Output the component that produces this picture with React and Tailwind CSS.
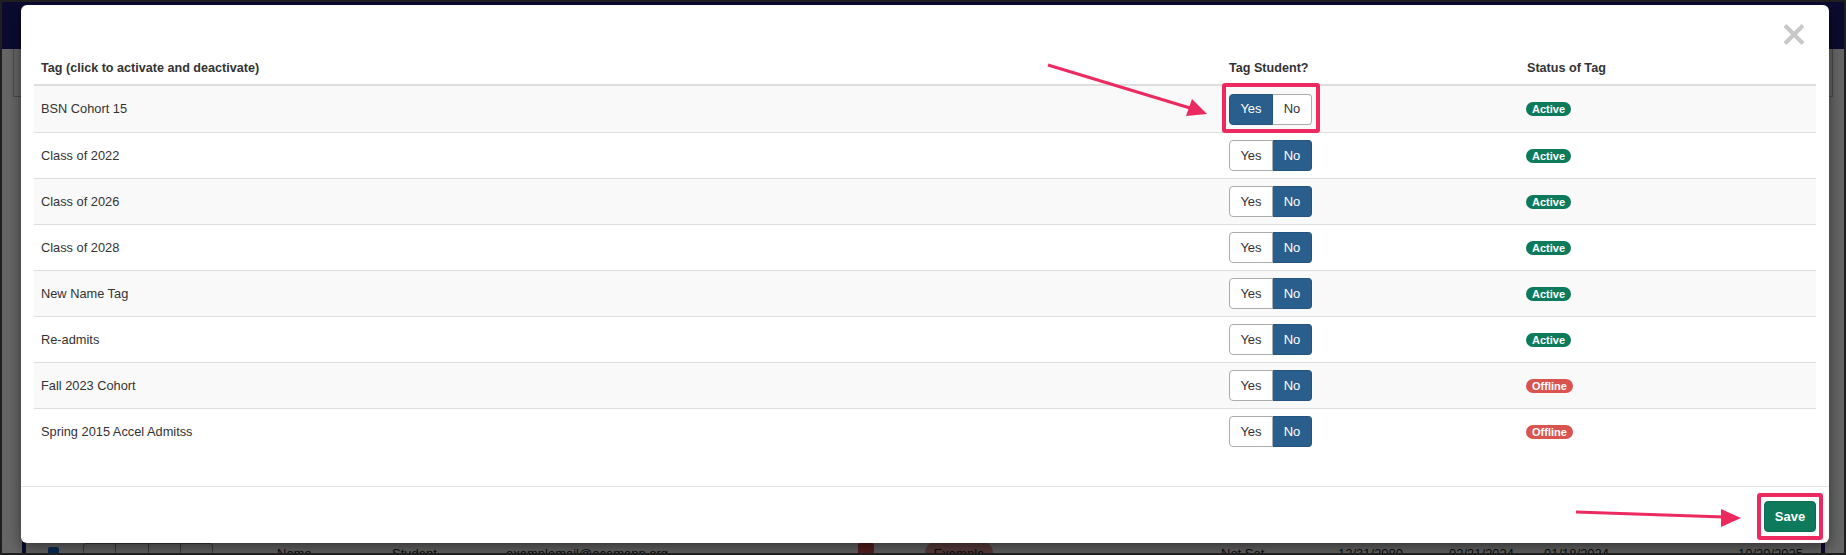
import React, { useState } from 'react';

const FONT = { fontFamily: '"Liberation Sans", Arial, sans-serif' };

const TAGS = [
  { name: 'BSN Cohort 15', tagged: true, status: 'Active' },
  { name: 'Class of 2022', tagged: false, status: 'Active' },
  { name: 'Class of 2026', tagged: false, status: 'Active' },
  { name: 'Class of 2028', tagged: false, status: 'Active' },
  { name: 'New Name Tag', tagged: false, status: 'Active' },
  { name: 'Re-admits', tagged: false, status: 'Active' },
  { name: 'Fall 2023 Cohort', tagged: false, status: 'Offline' },
  { name: 'Spring 2015 Accel Admitss', tagged: false, status: 'Offline' },
];

function YesNo({ value, onChange }) {
  const on = 'bg-[#2a5e8c] border-[#245480] text-white';
  const off = 'bg-white border-[#adadad] text-[#333]';
  return (
    <div className="flex h-[31px]">
      <button
        type="button"
        onClick={() => onChange(true)}
        className={`w-[44px] h-full border rounded-l-[4px] text-[13px] ${value ? on : off}`}
      >
        Yes
      </button>
      <button
        type="button"
        onClick={() => onChange(false)}
        className={`w-[39px] h-full border border-l-0 rounded-r-[4px] text-[13px] ${value ? off : on}`}
      >
        No
      </button>
    </div>
  );
}

function StatusBadge({ status }) {
  const color = status === 'Active' ? 'bg-[#0c7a5b]' : 'bg-[#d9534f]';
  return (
    <span className={`inline-block h-[14px] px-[6px] rounded-full text-[11px] leading-[14px] font-bold text-white ${color}`}>
      {status}
    </span>
  );
}

// page that sits under the modal backdrop
function BackgroundPage() {
  return (
    <div className="flex flex-col h-full bg-white">
      <div className="shrink-0 h-[47px] bg-[#1c1c78]" />
      <div className="shrink-0 mx-[11px] h-[48px] border-x border-b border-[#bbb]" />
      <div className="shrink-0 h-[444px]" />
      <div className="shrink-0 flex items-start h-[36px] text-[13px] text-[#222]">
        <div className="w-[20px]" />
        <div className="w-[4px] h-full bg-[#1c1c78]" />
        <div className="w-[22px]" />
        <div className="w-[11px] h-[11px] mt-[6px] bg-[#1a6fd8] rounded-[2px]" />
        <div className="w-[24px]" />
        <div className="flex w-[130px] h-[30px] mt-[2px] border border-[#999] rounded-[3px]">
          <div className="flex-1 border-r border-[#999]" />
          <div className="flex-1 border-r border-[#999]" />
          <div className="flex-1 border-r border-[#999]" />
          <div className="flex-1" />
        </div>
        <div className="w-[64px]" />
        <div className="w-[115px] pt-[3px]">Name</div>
        <div className="w-[114px] pt-[3px]">Student</div>
        <div className="w-[352px] pt-[3px]">examplemail@acemapp.org</div>
        <div className="w-[16px] h-[16px] mt-[2px] bg-[#d9534f] rounded-[2px]" />
        <div className="w-[51px]" />
        <div className="w-[68px] h-[20px] mt-[1px] rounded-full bg-[#e89a9a] text-center pt-[2px]">Example</div>
        <div className="w-[228px]" />
        <div className="w-[117px] pt-[3px]">Not Set</div>
        <div className="w-[111px] pt-[3px]">12/31/2080</div>
        <div className="w-[95px] pt-[3px]">02/21/2024</div>
        <div className="w-[194px] pt-[3px]">01/18/2024</div>
        <div className="w-[83px] pt-[3px]">10/29/2025</div>
        <div className="w-[4px] h-full bg-[#1c1c78]" />
      </div>
    </div>
  );
}

export default function App() {
  const [tags, setTags] = useState(TAGS);

  const setTagged = (i, v) =>
    setTags((prev) => prev.map((t, j) => (j === i ? { ...t, tagged: v } : t)));

  return (
    <div
      className="relative w-[1846px] h-[555px] overflow-hidden border-2 border-[#1f1f1f] bg-black"
      style={FONT}
    >
      <BackgroundPage />
      <div className="absolute inset-0 bg-black/60" />

      {/* modal */}
      <div className="absolute left-[19px] top-[3px] w-[1808px] h-[538px] flex flex-col bg-white rounded-[6px] shadow-[0_5px_15px_rgba(0,0,0,0.5)] text-[#333]">
        <div className="shrink-0 h-[47px] flex justify-end pt-[18px] pr-[24px]">
          <button type="button" className="w-[22px] h-[23px]">
            <svg width="22" height="23" viewBox="0 0 22 23">
              <path d="M2 2.5 L20 20.5 M20 2.5 L2 20.5" stroke="#c8c8c8" strokeWidth="4" />
            </svg>
          </button>
        </div>

        <div className="shrink-0 px-[13px]">
          <div className="grid grid-cols-[1187px_298px_1fr] h-[34px] items-center border-b-2 border-[#ddd] text-[12.6px] font-bold">
            <div className="px-[7px]">Tag (click to activate and deactivate)</div>
            <div className="px-[8px]">Tag Student?</div>
            <div className="px-[8px]">Status of Tag</div>
          </div>
          {tags.map((t, i) => (
            <div
              key={t.name}
              className={`grid grid-cols-[1187px_298px_1fr] h-[46px] items-center text-[12.8px] ${
                i > 0 ? 'border-t border-[#ddd]' : ''
              } ${i % 2 === 0 ? 'bg-[#f9f9f9]' : 'bg-white'}`}
            >
              <div className="px-[7px]">{t.name}</div>
              <div className="px-[8px]">
                <YesNo value={t.tagged} onChange={(v) => setTagged(i, v)} />
              </div>
              <div className="px-[7px] flex">
                <StatusBadge status={t.status} />
              </div>
            </div>
          ))}
        </div>

        <div className="shrink-0 h-[32px]" />

        <div className="flex-1 flex justify-end items-start border-t border-[#e5e5e5] pt-[14px] pr-[13px]">
          <button
            type="button"
            className="w-[52px] h-[31px] rounded-[4px] bg-[#0c7a5b] border border-[#0a6b50] text-white text-[13px] font-bold"
          >
            Save
          </button>
        </div>
      </div>

      {/* annotations */}
      <div className="absolute left-[1220px] top-[81px] w-[98px] h-[50px] border-4 border-[#ec2a60] rounded-[3px]" />
      <div className="absolute left-[1755px] top-[491px] w-[66px] h-[47px] border-4 border-[#ec2a60] rounded-[3px]" />
      <svg className="absolute left-[-2px] top-[-2px] pointer-events-none" width="1846" height="555">
        <line x1="1048" y1="65" x2="1190" y2="108" stroke="#ec2a60" strokeWidth="3" />
        <polygon points="1207,114 1186,116 1192,99" fill="#ec2a60" />
        <line x1="1576" y1="512" x2="1724" y2="517" stroke="#ec2a60" strokeWidth="3" />
        <polygon points="1741,518 1721,509 1721,527" fill="#ec2a60" />
      </svg>
    </div>
  );
}
